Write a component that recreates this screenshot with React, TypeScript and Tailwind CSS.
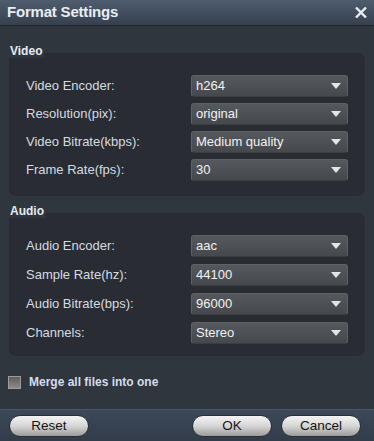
import React from 'react'

const videoRows = [
  { label: 'Video Encoder:', value: 'h264' },
  { label: 'Resolution(pix):', value: 'original' },
  { label: 'Video Bitrate(kbps):', value: 'Medium quality' },
  { label: 'Frame Rate(fps):', value: '30' },
]

const audioRows = [
  { label: 'Audio Encoder:', value: 'aac' },
  { label: 'Sample Rate(hz):', value: '44100' },
  { label: 'Audio Bitrate(bps):', value: '96000' },
  { label: 'Channels:', value: 'Stereo' },
]

function Select({ value }: { value: string }) {
  return (
    <div className="w-[157px] h-[22px] flex items-center justify-between pl-[4px] pr-[6px] rounded-[3px] bg-gradient-to-b from-[#55585c] to-[#45484c] border border-[#5e6165] border-b-[#3a3d41] text-[13px] text-[#f2f2f2]">
      <span>{value}</span>
      <svg width="10" height="6" viewBox="0 0 10 6">
        <path d="M0 0 H10 L5 6 Z" fill="#e4e4e4" />
      </svg>
    </div>
  )
}

function Group({ title, rows, gap, pb }: { title: string; rows: { label: string; value: string }[]; gap: string; pb: string }) {
  return (
    <div className="flex flex-col">
      <div className="relative z-10 self-start h-[14px] px-[2px] -ml-[1px] bg-[#30363e] text-[12px] leading-[14px] font-bold text-[#e6ebf2]">
        {title}
      </div>
      <div className={`-mt-[5px] rounded-[7px] bg-[#292d33] pt-[22px] pl-[17px] pr-[17px] flex flex-col ${gap} ${pb}`}>
        {rows.map((r) => (
          <div key={r.label} className="flex items-center h-[22px]">
            <span className="w-[165px] text-[13px] text-[#d6dbe1]">{r.label}</span>
            <Select value={r.value} />
          </div>
        ))}
      </div>
    </div>
  )
}

function PillButton({ label }: { label: string }) {
  return (
    <button className="w-[80px] h-[22px] rounded-full bg-gradient-to-b from-[#f4f4f4] via-[#d6d6d6] to-[#9c9c9c] border border-[#2a2f36] text-[13.5px] leading-[20px] text-[#141414]">
      {label}
    </button>
  )
}

export default function App() {
  return (
    <div className="w-[374px] h-[441px] flex flex-col bg-[#30363e] font-['Liberation_Sans',Arial,sans-serif] overflow-hidden">
      {/* Title bar */}
      <header className="h-[26px] flex items-center justify-between pl-[7px] pr-[7px] bg-gradient-to-b from-[#4f5c6e] to-[#36414f] border-b border-[#1e242b]">
        <span className="text-[15px] font-bold text-[#e8edf3] tracking-[-0.2px]">Format Settings</span>
        <svg width="12" height="11" viewBox="0 0 12 11">
          <path d="M1 0.5 L11 10.5 M11 0.5 L1 10.5" stroke="#e8ecf2" strokeWidth="2.4" />
        </svg>
      </header>

      {/* Content */}
      <main className="flex-1 flex flex-col pl-[9px] pr-[9px] pt-[18px]">
        <Group title="Video" rows={videoRows} gap="gap-[6px]" pb="pb-[15px]" />
        <div className="mt-[8px]">
          <Group title="Audio" rows={audioRows} gap="gap-[7px]" pb="pb-[12px]" />
        </div>
        <label className="mt-[17px] flex items-center gap-[8px] -ml-[1px]">
          <span className="w-[13px] h-[13px] border border-[#9c9c9c] bg-gradient-to-b from-[#5e5e5e] to-[#8a8a8a]" />
          <span className="text-[12px] font-bold text-[#d3ddec]">Merge all files into one</span>
        </label>
      </main>

      {/* Footer */}
      <footer className="h-[32px] flex items-center pl-[9px] pr-[13px] bg-gradient-to-b from-[#3d4858] to-[#323c4a] border-t border-[#4a5565]">
        <PillButton label="Reset" />
        <div className="flex-1" />
        <div className="flex gap-[9px]">
          <PillButton label="OK" />
          <PillButton label="Cancel" />
        </div>
      </footer>
    </div>
  )
}
